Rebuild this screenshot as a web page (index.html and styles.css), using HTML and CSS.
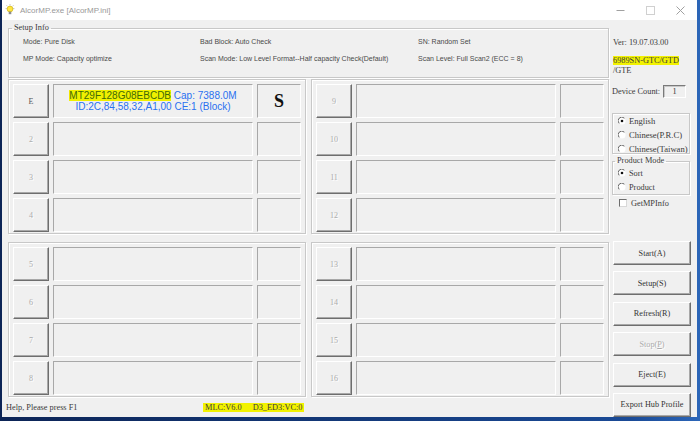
FILE: index.html
```html
<!DOCTYPE html>
<html>
<head>
<meta charset="utf-8">
<title>AlcorMP</title>
<link rel="stylesheet" href="styles.css">
</head>
<body>
<div class="window">
  <div class="titlebar">
    <svg class="appicon" viewBox="0 0 10 12" width="10" height="12">
      <g stroke="#9a9a9a" stroke-width="0.7">
        <line x1="5" y1="0.2" x2="5" y2="1.4"/>
        <line x1="0.6" y1="4.6" x2="1.8" y2="4.6"/>
        <line x1="8.2" y1="4.6" x2="9.4" y2="4.6"/>
        <line x1="1.6" y1="1.4" x2="2.4" y2="2.2"/>
        <line x1="8.4" y1="1.4" x2="7.6" y2="2.2"/>
      </g>
      <circle cx="5" cy="5" r="2.9" fill="#ffe642" stroke="#c8a800" stroke-width="0.6"/>
      <rect x="3.7" y="7.6" width="2.6" height="2.6" fill="#8c8c8c"/>
    </svg>
    <span class="title">AlcorMP.exe [AlcorMP.ini]</span>
    <div class="controls">
      <span class="ctl"><svg width="9" height="9" viewBox="0 0 9 9"><line x1="0.5" y1="4.5" x2="8.5" y2="4.5" stroke="#a0a0a0"/></svg></span>
      <span class="ctl"><svg width="9" height="9" viewBox="0 0 9 9"><rect x="0.5" y="0.5" width="8" height="8" fill="none" stroke="#d0d0d0"/></svg></span>
      <span class="ctl"><svg width="9" height="9" viewBox="0 0 9 9"><path d="M0.5 0.5 L8.5 8.5 M8.5 0.5 L0.5 8.5" stroke="#a0a0a0"/></svg></span>
    </div>
  </div>

  <div class="client">
    <div class="main">
      <fieldset class="setup">
        <legend>Setup Info</legend>
        <div class="setup-grid">
          <span>Mode: Pure Disk</span>
          <span>Bad Block: Auto Check</span>
          <span>SN: Random Set</span>
          <span>MP Mode: Capacity optimize</span>
          <span>Scan Mode: Low Level Format--Half capacity Check(Default)</span>
          <span>Scan Level: Full Scan2 (ECC = 8)</span>
        </div>
      </fieldset>

      <div class="ports">
        <div class="group">
          <div class="slot-btn active">E</div>
          <div class="sunken info">
            <div class="line"><span class="hl-blue">MT29F128G08EBCDB</span> Cap: 7388.0M</div>
            <div class="line">ID:2C,84,58,32,A1,00 CE:1 (Block)</div>
          </div>
          <div class="sunken result">S</div>
          <div class="slot-btn">2</div><div class="sunken"></div><div class="sunken"></div>
          <div class="slot-btn">3</div><div class="sunken"></div><div class="sunken"></div>
          <div class="slot-btn">4</div><div class="sunken"></div><div class="sunken"></div>
        </div>
        <div class="group">
          <div class="slot-btn">9</div><div class="sunken"></div><div class="sunken"></div>
          <div class="slot-btn">10</div><div class="sunken"></div><div class="sunken"></div>
          <div class="slot-btn">11</div><div class="sunken"></div><div class="sunken"></div>
          <div class="slot-btn">12</div><div class="sunken"></div><div class="sunken"></div>
        </div>
        <div class="group">
          <div class="slot-btn">5</div><div class="sunken"></div><div class="sunken"></div>
          <div class="slot-btn">6</div><div class="sunken"></div><div class="sunken"></div>
          <div class="slot-btn">7</div><div class="sunken"></div><div class="sunken"></div>
          <div class="slot-btn">8</div><div class="sunken"></div><div class="sunken"></div>
        </div>
        <div class="group">
          <div class="slot-btn">13</div><div class="sunken"></div><div class="sunken"></div>
          <div class="slot-btn">14</div><div class="sunken"></div><div class="sunken"></div>
          <div class="slot-btn">15</div><div class="sunken"></div><div class="sunken"></div>
          <div class="slot-btn">16</div><div class="sunken"></div><div class="sunken"></div>
        </div>
      </div>

      <div class="status">
        <span class="help">Help, Please press F1</span>
        <span class="hl fw"><span>MLC:V6.0</span><span class="d3">D3_ED3:VC:0</span></span>
      </div>
    </div>

    <div class="side">
      <div class="ver">Ver: 19.07.03.00</div>
      <div class="sn"><span class="hl">6989SN-GTC/GTD</span><br>/GTE</div>
      <div class="devcount"><span>Device Count:</span><span class="countbox">1</span></div>

      <div class="lang">
        <div class="opt"><svg class="radio" viewBox="0 0 8 8"><circle cx="4" cy="4" r="3.5" fill="#fff"/><path d="M1.2 6.4 A3.4 3.4 0 0 1 6.4 1.2" fill="none" stroke="#555" stroke-width="0.9"/><circle cx="4" cy="4" r="1.3" fill="#111"/></svg><span>English</span></div>
        <div class="opt"><svg class="radio" viewBox="0 0 8 8"><circle cx="4" cy="4" r="3.5" fill="#fff"/><path d="M1.2 6.4 A3.4 3.4 0 0 1 6.4 1.2" fill="none" stroke="#555" stroke-width="0.9"/></svg><span>Chinese(P.R.C)</span></div>
        <div class="opt"><svg class="radio" viewBox="0 0 8 8"><circle cx="4" cy="4" r="3.5" fill="#fff"/><path d="M1.2 6.4 A3.4 3.4 0 0 1 6.4 1.2" fill="none" stroke="#555" stroke-width="0.9"/></svg><span>Chinese(Taiwan)</span></div>
      </div>

      <fieldset class="pmode">
        <legend>Product Mode</legend>
        <div class="opts">
          <div class="opt"><svg class="radio" viewBox="0 0 8 8"><circle cx="4" cy="4" r="3.5" fill="#fff"/><path d="M1.2 6.4 A3.4 3.4 0 0 1 6.4 1.2" fill="none" stroke="#555" stroke-width="0.9"/><circle cx="4" cy="4" r="1.3" fill="#111"/></svg><span>Sort</span></div>
          <div class="opt"><svg class="radio" viewBox="0 0 8 8"><circle cx="4" cy="4" r="3.5" fill="#fff"/><path d="M1.2 6.4 A3.4 3.4 0 0 1 6.4 1.2" fill="none" stroke="#555" stroke-width="0.9"/></svg><span>Product</span></div>
        </div>
      </fieldset>

      <div class="check"><span class="cbox"></span><span>GetMPInfo</span></div>

      <div class="buttons">
        <div class="btn">Start(A)</div>
        <div class="btn">Setup(S)</div>
        <div class="btn">Refresh(R)</div>
        <div class="btn disabled">Stop(<u>P</u>)</div>
        <div class="btn">Eject(E)</div>
        <div class="btn">Export Hub Profile</div>
      </div>
    </div>
  </div>
</div>
</body>
</html>
```

FILE: styles.css
```css
* { box-sizing: border-box; }
html, body { margin: 0; padding: 0; }
body {
  width: 700px;
  height: 421px;
  overflow: hidden;
  background: linear-gradient(90deg, #0c2456, #1a4a96 90%, #2c66b8);
  font-family: "Liberation Serif", serif;
}
.window {
  margin-left: 2px;
  width: 695px;
  height: 417px;
  background: #f0f0f0;
  display: flex;
  flex-direction: column;
  overflow: hidden;
}
.titlebar {
  flex: none;
  height: 20px;
  background: #fff;
  display: flex;
  align-items: center;
}
.appicon { margin-left: 3px; width: 10px; height: 12px; }
.title {
  margin-left: 5px;
  font: 8px "Liberation Sans", sans-serif;
  color: #999;
}
.controls { margin-left: auto; display: flex; padding-right: 2px; }
.ctl { width: 30px; height: 20px; display: flex; align-items: center; justify-content: center; }

.client { flex: 1; display: flex; gap: 3px; min-height: 0; }
.main {
  width: 607px;
  flex: none;
  padding-left: 4px;
  display: flex;
  flex-direction: column;
}

.setup {
  margin: 3px 0 0 2px;
  padding: 0 0 10px 0;
  width: 601px;
  min-width: 0;
  border: 1px solid #c8c8c8;
  box-shadow: inset 1px 1px 0 #fff, 1px 1px 0 #fff;
}
.setup legend {
  margin-left: 3px;
  padding: 0 2px;
  font-size: 8.3px;
  line-height: 10px;
  color: #3a3a3a;
}
.setup-grid {
  display: grid;
  grid-template-columns: 177px 218px 1fr;
  grid-auto-rows: 17px;
  align-items: center;
  padding-left: 14px;
  font: 7px "Liberation Sans", sans-serif;
  color: #4a4a4a;
  white-space: nowrap;
}

.ports {
  margin: 1px 0 0 2px;
  display: grid;
  grid-template-columns: 298px 298px;
  grid-template-rows: 155px 155px;
  column-gap: 5px;
  row-gap: 8px;
}
.group {
  border: 1px solid #c8c8c8;
  box-shadow: inset 1px 1px 0 #fff, 1px 1px 0 #fff;
  padding: 4px 4px 1px 4px;
  display: grid;
  grid-template-columns: 36px 1fr 44px;
  grid-auto-rows: 34px;
  gap: 4px;
}
.slot-btn {
  background: #f0f0f0;
  border: 1px solid;
  border-color: #fff #6e6e6e #6e6e6e #fff;
  box-shadow: inset -1px -1px 0 #a8a8a8;
  display: flex;
  align-items: center;
  justify-content: center;
  font-size: 8px;
  color: #acacac;
  text-shadow: 1px 1px 0 #fff;
}
.slot-btn.active { color: #555; text-shadow: none; }
.sunken {
  border: 1px solid;
  border-color: #a8a8a8 #fff #fff #a8a8a8;
  background: #f0f0f0;
}
.info {
  display: flex;
  flex-direction: column;
  align-items: center;
  justify-content: center;
  font: 10px "Liberation Sans", sans-serif;
  color: #2a70f0;
  line-height: 11px;
}
.hl-blue { background: #f0f000; color: #3f6a08; }
.result {
  display: flex;
  align-items: center;
  justify-content: center;
  font: bold 18px "Liberation Serif", serif;
  color: #111;
}

.status {
  height: 20px;
  display: flex;
  align-items: center;
  font-size: 8.3px;
  color: #3a3a3a;
}
.status .help { width: 197px; flex: none; }
.hl { background: #f2f200; }
.fw { display: inline-flex; padding: 0 2px; line-height: 9px; }
.fw .d3 { margin-left: 11px; }

.side {
  width: 85px;
  flex: none;
  display: flex;
  flex-direction: column;
  font-size: 8.3px;
  color: #3a3a3a;
}
.ver { margin: 18px 0 0 1px; line-height: 10px; }
.sn { margin: 8px 0 0 1px; line-height: 10px; }
.devcount { margin-top: 9px; height: 13px; display: flex; align-items: center; }
.countbox {
  margin-left: 3px;
  width: 23px;
  height: 13px;
  border: 1px solid;
  border-color: #7a7a7a #fff #fff #7a7a7a;
  box-shadow: inset 1px 1px 0 #c8c8c8;
  display: flex;
  align-items: center;
  justify-content: center;
}

.lang {
  margin-top: 15px;
  width: 78px;
  height: 41px;
  border: 1px solid #c8c8c8;
  box-shadow: inset 1px 1px 0 #fff, 1px 1px 0 #fff;
  padding-left: 5px;
  overflow: hidden;
  white-space: nowrap;
  font-size: 8.6px;
}
.opt { height: 14px; display: flex; align-items: center; gap: 3px; }
.radio { width: 8px; height: 8px; flex: none; }

.pmode {
  margin: 2px 0 0 0;
  padding: 0;
  width: 78px;
  min-width: 0;
  border: 1px solid #c8c8c8;
  box-shadow: inset 1px 1px 0 #fff, 1px 1px 0 #fff;
}
.pmode legend { margin-left: 2px; padding: 0 2px; line-height: 10px; }
.pmode .opts { padding-left: 5px; }

.check { margin-top: 1px; height: 14px; display: flex; align-items: center; gap: 4px; padding-left: 7px; }
.cbox {
  width: 8px;
  height: 8px;
  background: #fff;
  border: 1px solid;
  border-color: #6e6e6e #d8d8d8 #d8d8d8 #6e6e6e;
}

.buttons { margin-top: 31px; display: flex; flex-direction: column; }
.btn {
  margin-left: 1px;
  width: 78px;
  height: 24px;
  flex: none;
  background: #f0f0f0;
  border: 1px solid;
  border-color: #fff #6e6e6e #6e6e6e #fff;
  box-shadow: inset -1px -1px 0 #a8a8a8;
  display: flex;
  align-items: center;
  justify-content: center;
  font-size: 8.2px;
  color: #333;
  white-space: nowrap;
}
.btn + .btn { margin-top: 6.4px; }
.btn.disabled { color: #acacac; text-shadow: 1px 1px 0 #fff; }
```
